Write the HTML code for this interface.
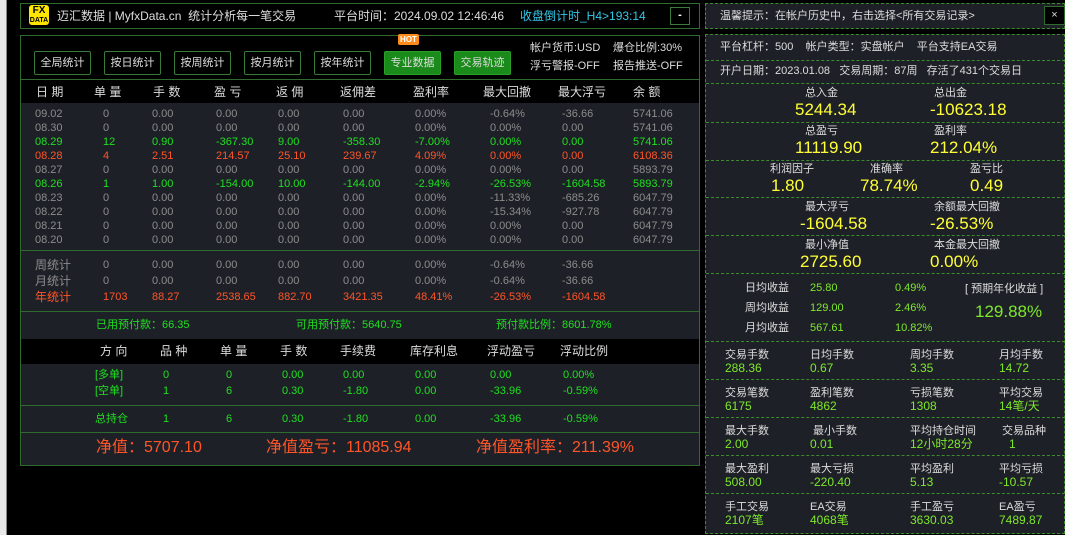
<!DOCTYPE html>
<html><head><meta charset="utf-8"><style>
*{margin:0;padding:0;box-sizing:border-box}
body{width:1065px;height:535px;background:#000;position:relative;overflow:hidden;font-family:"Liberation Sans","Noto Sans CJK SC",sans-serif;font-size:11px;color:#8c8c8c}
.a{position:absolute;white-space:nowrap;line-height:14px}
.g{color:#1fe01f}.r{color:#ff5527}.w{color:#ddd}.y{color:#ffff33}.lg{color:#7ee82a}
.btn{position:absolute;top:51px;width:57px;height:24px;border:1px solid #3a7a3a;border-radius:2px;color:#ddd;font-size:11px;text-align:center;line-height:22px}
.gb{background:#1a8a1a;border-color:#2aa02a}
.rp{position:absolute;left:705px;width:360px;border:1px dashed #3c8c2c;background:#1e2028}
.hl{position:absolute;left:706px;width:359px;border-top:1px dashed #3c8c2c}
.big{font-size:17px;color:#ffff33;line-height:20px}
</style></head><body>
<div class="a" style="left:0;top:0;width:6px;height:535px;background:#e8e8e8"></div>
<div class="a" style="left:6px;top:0;width:1px;height:535px;background:#888"></div>
<!-- title -->
<div class="a" style="left:20px;top:3px;width:680px;height:26px;border:1px solid #2f6a2f"></div>
<div class="a" style="left:29px;top:5px;width:20px;height:20px;background:#ffe600;border-radius:3px;color:#000;font-weight:bold;font-size:10px;line-height:9px;text-align:center;padding-top:1px">FX<br><span style="font-size:7px">DATA</span></div>
<div class="a w" style="left:57px;top:8px;font-size:12px;line-height:16px">迈汇数据 | MyfxData.cn &nbsp;统计分析每一笔交易</div>
<div class="a w" style="left:334px;top:8px;font-size:12px;line-height:16px">平台时间：2024.09.02 12:46:46</div>
<div class="a" style="left:520px;top:8px;font-size:12px;line-height:16px;color:#33c8e8">收盘倒计时_H4&gt;193:14</div>
<div class="a" style="left:670px;top:7px;width:20px;height:18px;border:1px solid #3a7a3a;color:#fff;text-align:center;line-height:15px;font-weight:bold">-</div>
<!-- main panel -->
<div class="a" style="left:20px;top:35px;width:680px;height:431px;border:1px solid #2f6a2f"></div>
<div class="btn" style="left:34px">全局统计</div>
<div class="btn" style="left:104px">按日统计</div>
<div class="btn" style="left:174px">按周统计</div>
<div class="btn" style="left:244px">按月统计</div>
<div class="btn" style="left:314px">按年统计</div>
<div class="btn gb" style="left:384px">专业数据</div>
<div class="btn gb" style="left:454px">交易轨迹</div>
<div class="a" style="left:398px;top:34px;width:21px;height:11px;background:#ff8c1a;color:#fff;font-size:8px;font-weight:bold;text-align:center;line-height:11px;border-radius:2px">HOT</div>
<div class="a w" style="left:530px;top:41px">帐户货币:USD</div>
<div class="a w" style="left:613px;top:41px">爆仓比例:30%</div>
<div class="a w" style="left:530px;top:59px">浮亏警报-OFF</div>
<div class="a w" style="left:613px;top:59px">报告推送-OFF</div>
<div class="a" style="left:21px;top:79px;width:678px;height:1px;background:#2f6a2f"></div>
<div class="a" style="left:21px;top:103px;width:678px;height:362px;background:#1e2028"></div>
<div class="a" style="left:21px;top:339px;width:678px;height:25px;background:#000"></div>
<div class="a" style="left:21px;top:250px;width:678px;height:1px;background:#2f6a2f"></div>
<div class="a" style="left:21px;top:311px;width:678px;height:1px;background:#2f6a2f"></div>
<div class="a" style="left:21px;top:405px;width:678px;height:1px;background:#2f6a2f"></div>
<div class="a" style="left:21px;top:432px;width:678px;height:1px;background:#2f6a2f"></div>
<div id="t"></div>
<!-- right panel -->
<div class="rp" style="top:3px;height:26px"></div>
<div class="a w" style="left:720px;top:9px">温馨提示：在帐户历史中，右击选择&lt;所有交易记录&gt;</div>
<div class="a" style="left:1044px;top:6px;width:21px;height:19px;border:1px solid #2f6a2f;background:#000;color:#ddd;text-align:center;line-height:17px">×</div>
<div class="rp" style="top:34px;height:500px"></div>
<div class="hl" style="top:60px"></div><div class="hl" style="top:83px"></div>
<div class="hl" style="top:122px"></div><div class="hl" style="top:160px"></div>
<div class="hl" style="top:197px"></div><div class="hl" style="top:235px"></div>
<div class="hl" style="top:273px"></div><div class="hl" style="top:341px"></div>
<div class="hl" style="top:379px"></div><div class="hl" style="top:417px"></div>
<div class="hl" style="top:455px"></div><div class="hl" style="top:493px"></div>
<div class="a w" style="left:720px;top:40px">平台杠杆：500 &nbsp;&nbsp;&nbsp;帐户类型：实盘帐户 &nbsp;&nbsp;&nbsp;平台支持EA交易</div>
<div class="a w" style="left:720px;top:64px">开户日期：2023.01.08 &nbsp;&nbsp;交易周期：87周 &nbsp;&nbsp;存活了431个交易日</div>
<div class="a w" style="left:805px;top:86px">总入金</div><div class="a w" style="left:934px;top:86px">总出金</div>
<div class="a big" style="left:795px;top:100px">5244.34</div><div class="a big" style="left:930px;top:100px">-10623.18</div>
<div class="a w" style="left:805px;top:124px">总盈亏</div><div class="a w" style="left:934px;top:124px">盈利率</div>
<div class="a big" style="left:795px;top:138px">11119.90</div><div class="a big" style="left:930px;top:138px">212.04%</div>
<div class="a w" style="left:770px;top:162px">利润因子</div><div class="a w" style="left:870px;top:162px">准确率</div><div class="a w" style="left:970px;top:162px">盈亏比</div>
<div class="a big" style="left:771px;top:176px">1.80</div><div class="a big" style="left:860px;top:176px">78.74%</div><div class="a big" style="left:970px;top:176px">0.49</div>
<div class="a w" style="left:805px;top:200px">最大浮亏</div><div class="a w" style="left:934px;top:200px">余额最大回撤</div>
<div class="a big" style="left:800px;top:214px">-1604.58</div><div class="a big" style="left:930px;top:214px">-26.53%</div>
<div class="a w" style="left:805px;top:238px">最小净值</div><div class="a w" style="left:934px;top:238px">本金最大回撤</div>
<div class="a big" style="left:800px;top:252px">2725.60</div><div class="a big" style="left:930px;top:252px">0.00%</div>
<div class="a w" style="left:745px;top:281px">日均收益</div><div class="a lg" style="left:810px;top:281px">25.80</div><div class="a lg" style="left:895px;top:281px">0.49%</div>
<div class="a w" style="left:745px;top:301px">周均收益</div><div class="a lg" style="left:810px;top:301px">129.00</div><div class="a lg" style="left:895px;top:301px">2.46%</div>
<div class="a w" style="left:745px;top:321px">月均收益</div><div class="a lg" style="left:810px;top:321px">567.61</div><div class="a lg" style="left:895px;top:321px">10.82%</div>
<div class="a w" style="left:965px;top:282px">[ 预期年化收益 ]</div>
<div class="a lg" style="left:975px;top:302px;font-size:17px;line-height:20px">129.88%</div>
<div id="rg"></div>
<script>
var h='';
function s(x,y,t,c,st){h+='<div class="a '+(c||'')+'" style="left:'+x+'px;top:'+y+'px;'+(st||'')+'">'+t+'</div>';}
var hx=[36,94,153,214,276,340,413,483,558,633],hd=['日 期','单 量','手 数','盈 亏','返 佣','返佣差','盈利率','最大回撤','最大浮亏','余 额'];
hd.forEach(function(t,i){s(hx[i],84,t,'w','font-size:12px;line-height:16px');});
var cx=[35,103,152,216,278,343,415,490,562,633];
var rows=[['09.02','0','0.00','0.00','0.00','0.00','0.00%','-0.64%','-36.66','5741.06',''],
['08.30','0','0.00','0.00','0.00','0.00','0.00%','0.00%','0.00','5741.06',''],
['08.29','12','0.90','-367.30','9.00','-358.30','-7.00%','0.00%','0.00','5741.06','g'],
['08.28','4','2.51','214.57','25.10','239.67','4.09%','0.00%','0.00','6108.36','r'],
['08.27','0','0.00','0.00','0.00','0.00','0.00%','0.00%','0.00','5893.79',''],
['08.26','1','1.00','-154.00','10.00','-144.00','-2.94%','-26.53%','-1604.58','5893.79','g'],
['08.23','0','0.00','0.00','0.00','0.00','0.00%','-11.33%','-685.26','6047.79',''],
['08.22','0','0.00','0.00','0.00','0.00','0.00%','-15.34%','-927.78','6047.79',''],
['08.21','0','0.00','0.00','0.00','0.00','0.00%','0.00%','0.00','6047.79',''],
['08.20','0','0.00','0.00','0.00','0.00','0.00%','0.00%','0.00','6047.79','']];
rows.forEach(function(r,j){for(var i=0;i<10;i++)s(cx[i],107+j*14,r[i],r[10]);});
var sm=[['周统计','0','0.00','0.00','0.00','0.00','0.00%','-0.64%','-36.66',''],
['月统计','0','0.00','0.00','0.00','0.00','0.00%','-0.64%','-36.66',''],
['年统计','1703','88.27','2538.65','882.70','3421.35','48.41%','-26.53%','-1604.58','r']];
sm.forEach(function(r,j){for(var i=0;i<9;i++)s(cx[i],258+j*16,r[i],r[9],i==0?'font-size:12px':'');});
s(96,318,'已用预付款：66.35','g');s(296,318,'可用预付款：5640.75','g');s(496,318,'预付款比例：8601.78%','g');
var lx=[100,160,220,280,340,410,487,560],lh=['方 向','品 种','单 量','手 数','手续费','库存利息','浮动盈亏','浮动比例'];
lh.forEach(function(t,i){s(lx[i],343,t,'w','font-size:12px;line-height:16px');});
var vx=[95,163,226,282,343,415,490,563];
[['[多单]','0','0','0.00','0.00','0.00','0.00','0.00%',368],['[空单]','1','6','0.30','-1.80','0.00','-33.96','-0.59%',384],['总持仓','1','6','0.30','-1.80','0.00','-33.96','-0.59%',412]].forEach(function(r){for(var i=0;i<8;i++)s(vx[i],r[8],r[i],'g');});
s(96,438,'净值：5707.10','r','font-size:16px;line-height:20px');s(266,438,'净值盈亏：11085.94','r','font-size:16px;line-height:20px');s(476,438,'净值盈利率：211.39%','r','font-size:16px;line-height:20px');
document.getElementById('t').outerHTML=h;
h='';
var gx=[725,810,910,999];
var grid=[[['交易手数','288.36'],['日均手数','0.67'],['周均手数','3.35'],['月均手数','14.72']],
[['交易笔数','6175'],['盈利笔数','4862'],['亏损笔数','1308'],['平均交易','14笔/天']],
[['最大手数','2.00'],[' 最小手数','0.01'],['平均持仓时间','12小时28分'],[' 交易品种','&nbsp;&nbsp;&nbsp;1']],
[['最大盈利','508.00'],['最大亏损','-220.40'],['平均盈利','5.13'],['平均亏损','-10.57']],
[['手工交易','2107笔'],['EA交易','4068笔'],['手工盈亏','3630.03'],['EA盈亏','7489.87']]];
grid.forEach(function(r,j){r.forEach(function(c,i){s(gx[i],348+j*38,c[0].replace(' ','&nbsp;'),'w');s(gx[i],361+j*38,c[1],'lg','font-size:12px');});});
document.getElementById('rg').outerHTML=h;
</script>
</body></html>
